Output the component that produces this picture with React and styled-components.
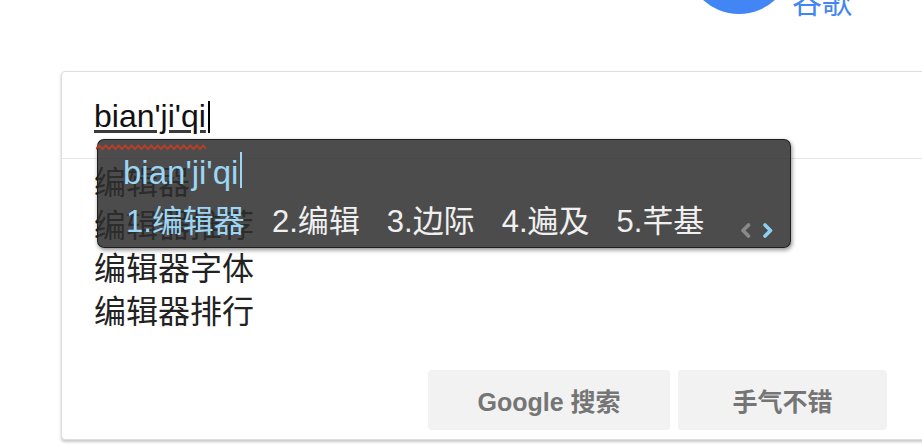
import React from "react";
import styled, { createGlobalStyle } from "styled-components";

const GlobalStyle = createGlobalStyle`
  html, body {
    margin: 0;
    background: #fff;
    overflow: hidden;
  }
  body {
    font-family: "Liberation Sans", "Noto Sans CJK SC", sans-serif;
  }
`;

const Page = styled.div`
  width: 922px;
  height: 448px;
  overflow: hidden;
`;

const Header = styled.div`
  display: flex;
  justify-content: flex-end;
  align-items: flex-end;
  height: 106px;
  margin-top: -92px;
  padding-right: 70px;
`;

const Avatar = styled.div`
  width: 106px;
  height: 106px;
  border-radius: 50%;
  background: #4285f4;
  flex-shrink: 0;
`;

const UserName = styled.div`
  font-family: "Noto Sans CJK SC", sans-serif;
  font-size: 30px;
  line-height: 30px;
  color: #4285f4;
  margin-bottom: -1px;
`;

const Card = styled.div`
  position: relative;
  width: 1000px;
  margin: 57px 0 0 61px;
  background: #fff;
  border: 1px solid #dedede;
  border-radius: 4px;
  box-shadow: 0 2px 3px rgba(0, 0, 0, 0.22);
`;

const InputRow = styled.div`
  box-sizing: border-box;
  height: 87px;
  padding: 24px 0 0 32px;
  border-bottom: 1px solid #e6e6e6;
`;

const Typed = styled.span`
  font-size: 32px;
  line-height: 40px;
  color: #111;
  text-decoration: underline;
  text-decoration-color: #3a3a3a;
  text-decoration-thickness: 3px;
  text-underline-offset: 3px;
`;

const Caret = styled.span`
  display: inline-block;
  width: 2px;
  height: ${(p) => p.$h}px;
  margin-left: 2px;
  vertical-align: ${(p) => p.$drop}px;
  background: ${(p) => p.$color};
`;

const SuggestionList = styled.div`
  padding-left: 32px;
  font-family: "Noto Sans CJK SC", sans-serif;
  font-size: 32px;
  line-height: 43px;
  color: #222;
`;

const ButtonRow = styled.div`
  display: flex;
  gap: 8px;
  margin-top: 39px;
  padding: 0 0 9px 366px;
`;

const Button = styled.button`
  width: ${(p) => p.$w}px;
  height: 60px;
  border: none;
  border-radius: 4px;
  background: #f2f2f2;
  color: #757575;
  font-family: "Liberation Sans", "Noto Sans CJK SC", sans-serif;
  font-weight: bold;
  font-size: 25px;
  padding: 0;
`;

const Wavy = styled.svg`
  position: absolute;
  left: 34px;
  top: 72px;
  z-index: 2;
`;

const Popup = styled.div`
  position: absolute;
  left: 35px;
  top: 67px;
  z-index: 1;
  box-sizing: border-box;
  width: 694px;
  height: 109px;
  display: flex;
  flex-direction: column;
  padding: 12px 16px 0 25px;
  background: rgba(46, 46, 46, 0.86);
  border: 1px solid rgba(25, 25, 25, 0.9);
  border-radius: 7px;
  box-shadow: 1px 2px 4px rgba(0, 0, 0, 0.45);
`;

const Preedit = styled.div`
  font-size: 33px;
  line-height: 36px;
  color: #9dd6f4;
`;

const CandidateRow = styled.div`
  display: flex;
  gap: 27px;
  margin-top: 11px;
  padding-left: 3px;
  font-size: 31px;
  line-height: 40px;
`;

const Candidate = styled.span`
  color: ${(p) => (p.$active ? "#9dd6f4" : "#f0f0f0")};
  white-space: nowrap;
`;

const Pager = styled.svg`
  margin-left: auto;
  align-self: flex-end;
  margin-bottom: 4px;
  flex-shrink: 0;
`;

const candidates = ["编辑器", "编辑", "边际", "遍及", "芊基"];
const suggestions = ["编辑器", "编辑器推荐", "编辑器字体", "编辑器排行"];

function wavePath(width, period) {
  let d = "M0 5";
  for (let x = 0; x < width; x += period) {
    d += ` L${x + period / 2} 1.5 L${x + period} 5`;
  }
  return d;
}

export default function App() {
  return (
    <Page>
      <GlobalStyle />
      <Header>
        <Avatar />
        <UserName>谷歌</UserName>
      </Header>
      <Card>
        <InputRow>
          <Typed>bian'ji'qi</Typed>
          <Caret $h={32} $drop={-6} $color="#000" />
        </InputRow>
        <SuggestionList>
          {suggestions.map((s) => (
            <div key={s}>{s}</div>
          ))}
        </SuggestionList>
        <ButtonRow>
          <Button $w={242}>Google 搜索</Button>
          <Button $w={209}>手气不错</Button>
        </ButtonRow>

        <Wavy width="110" height="7" viewBox="0 0 110 7">
          <path d={wavePath(108, 6.5)} fill="none" stroke="#b0402a" strokeWidth="1.9" />
        </Wavy>
        <Popup>
          <Preedit>
            bian'ji'qi
            <Caret $h={36} $drop={-4} $color="#9dd6f4" />
          </Preedit>
          <CandidateRow>
            {candidates.map((c, i) => (
              <Candidate key={c} $active={i === 0}>
                {i + 1}.{c}
              </Candidate>
            ))}
            <Pager width="34" height="15" viewBox="0 0 34 15">
              <polyline points="8.5,2 3,7.5 8.5,13" fill="none" stroke="#8a8a8a" strokeWidth="3.6" strokeLinecap="round" strokeLinejoin="round" />
              <polyline points="25,2 30.5,7.5 25,13" fill="none" stroke="#8fd0f0" strokeWidth="3.6" strokeLinecap="round" strokeLinejoin="round" />
            </Pager>
          </CandidateRow>
        </Popup>
      </Card>
    </Page>
  );
}
